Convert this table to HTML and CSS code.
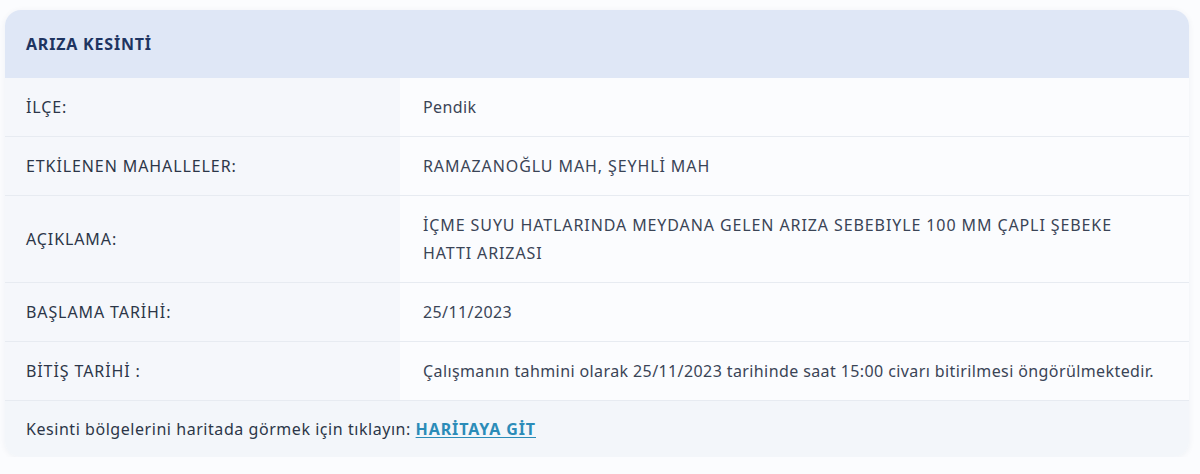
FILE: index.html
```html
<!DOCTYPE html>
<html lang="tr">
<head>
<meta charset="utf-8">
<link rel="stylesheet" href="styles.css">
</head>
<body>
<div class="page">
  <section class="card">
    <header class="card-head">ARIZA KESİNTİ</header>
    <div class="rows">
      <div class="row">
        <div class="label">İLÇE:</div>
        <div class="value">Pendik</div>
      </div>
      <div class="row">
        <div class="label">ETKİLENEN MAHALLELER:</div>
        <div class="value caps">RAMAZANOĞLU MAH, ŞEYHLİ MAH</div>
      </div>
      <div class="row">
        <div class="label">AÇIKLAMA:</div>
        <div class="value caps">İÇME SUYU HATLARINDA MEYDANA GELEN ARIZA SEBEBIYLE 100 MM ÇAPLI ŞEBEKE HATTI ARIZASI</div>
      </div>
      <div class="row">
        <div class="label">BAŞLAMA TARİHİ:</div>
        <div class="value">25/11/2023</div>
      </div>
      <div class="row">
        <div class="label">BİTİŞ TARİHİ :</div>
        <div class="value">Çalışmanın tahmini olarak 25/11/2023 tarihinde saat 15:00 civarı bitirilmesi öngörülmektedir.</div>
      </div>
    </div>
    <footer class="card-foot">Kesinti bölgelerini haritada görmek için tıklayın: <a class="map-link" href="#">HARİTAYA GİT</a></footer>
  </section>
</div>
</body>
</html>
```

FILE: styles.css
```css
* { box-sizing: border-box; }
html, body { margin: 0; padding: 0; }
body {
  background: #fbfcfe;
  font-family: "Noto Sans", sans-serif;
  font-size: 16px;
  letter-spacing: 0.4px;
  color: #2f3a4c;
}
.page {
  padding: 10px 11px 0 5px;
}
.card {
  border-radius: 16px;
  overflow: hidden;
  background: #fafbfd;
  box-shadow: 0 1px 6px rgba(30, 50, 90, 0.06);
}
.card-head {
  background: #dfe7f6;
  color: #1e3461;
  font-weight: 700;
  letter-spacing: 0.8px;
  line-height: 28px;
  padding: 20px 21px;
}
.rows {
  display: flex;
  flex-direction: column;
}
.row {
  display: grid;
  grid-template-columns: 395px 1fr;
  border-bottom: 1px solid #e7ebf1;
}
.label {
  background: #f5f7fb;
  padding: 15px 21px;
  line-height: 28px;
  letter-spacing: 0.9px;
  display: flex;
  align-items: center;
  color: #2c3648;
}
.value {
  background: #fbfcfe;
  padding: 15px 24px 15px 23px;
  line-height: 28px;
  color: #3a4456;
}
.value.caps {
  letter-spacing: 0.9px;
}
.card-foot {
  background: #f3f6fa;
  padding: 14px 21px;
  line-height: 28px;
  letter-spacing: 0.55px;
  color: #2c3648;
}
.map-link {
  color: #2b8cb8;
  font-weight: 700;
  letter-spacing: 0.9px;
  text-decoration: underline;
  text-underline-offset: 2px;
}
```
